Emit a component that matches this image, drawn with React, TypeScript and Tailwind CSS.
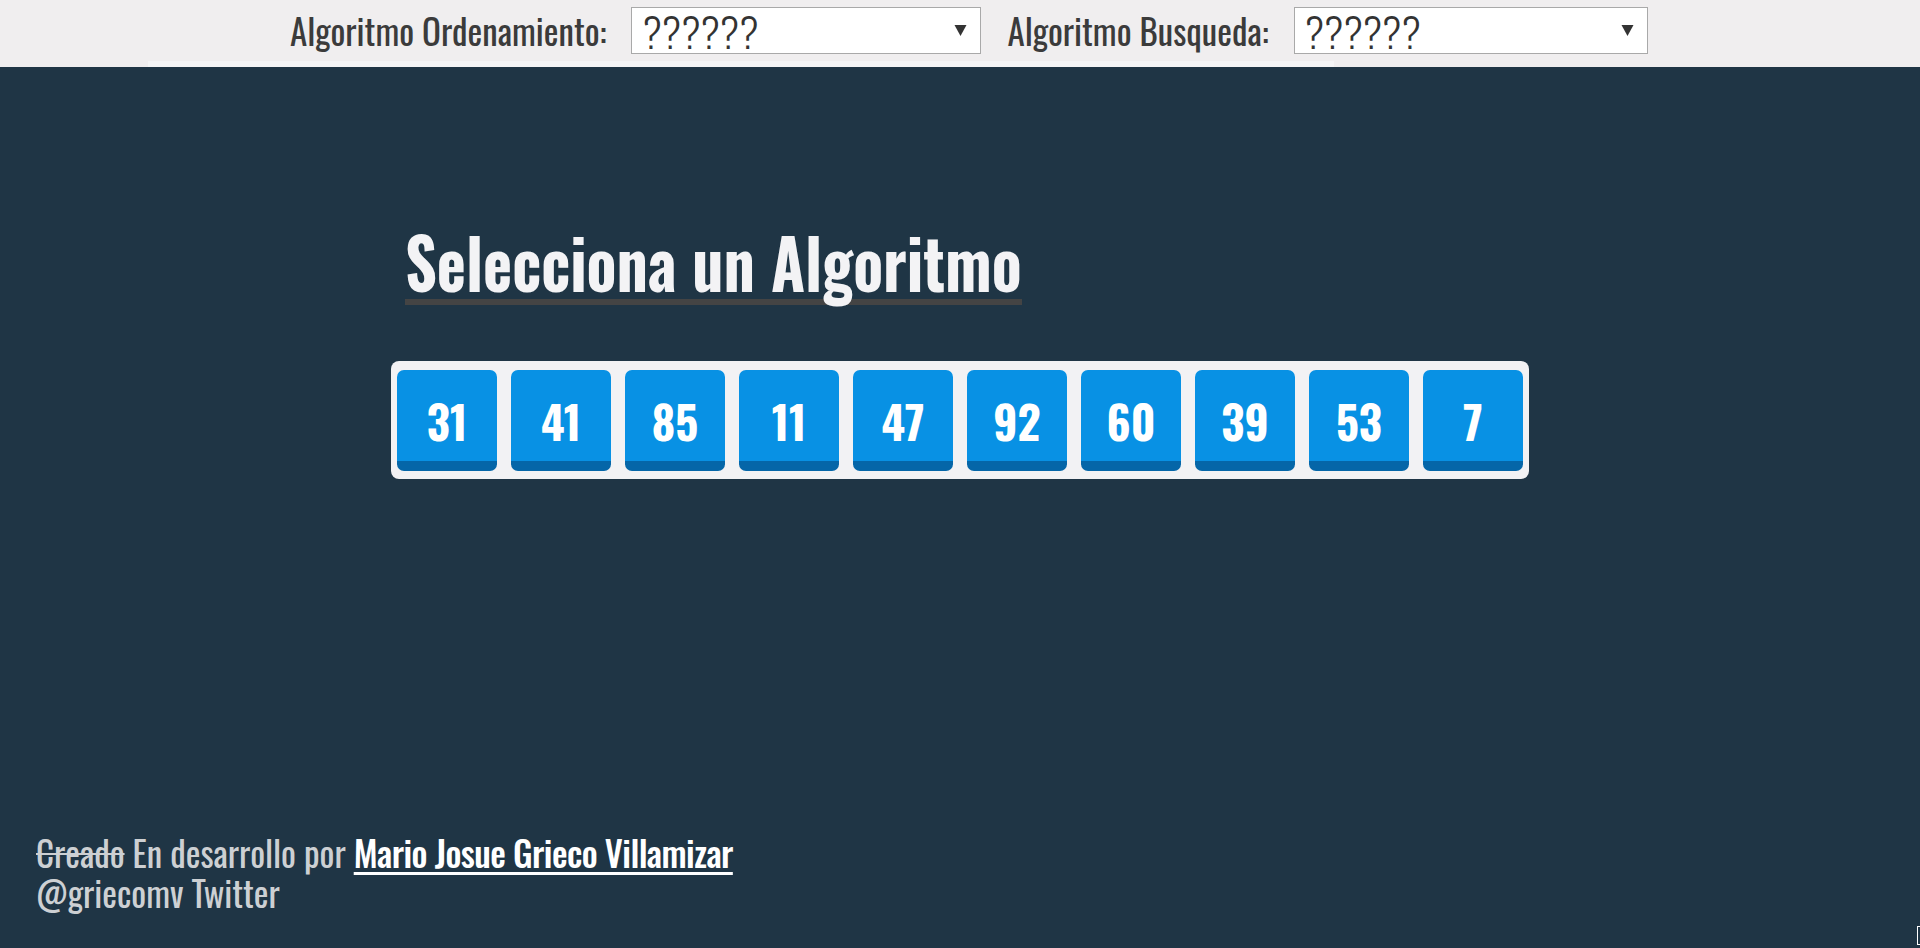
import { useState } from "react"

const numbers = [31, 41, 85, 11, 47, 92, 60, 39, 53, 7]

function Picker({ width }: { width: string }) {
  const [value, setValue] = useState("??????")
  return (
    <div className={`relative h-[47px] ${width}`}>
      <select
        value={value}
        onChange={(e) => setValue(e.target.value)}
        className="h-full w-full appearance-none border border-[#a9a9a9] bg-white pl-[10px] text-[41px] font-light leading-none text-[#333] outline-none"
      >
        <option>??????</option>
      </select>
      <svg className="pointer-events-none absolute right-[14px] top-[17px]" width="13" height="13" viewBox="0 0 13 13">
        <path d="M0.5 1 L12.5 1 L6.5 12 Z" fill="#333" />
      </svg>
    </div>
  )
}

export default function App() {
  return (
    <div className="relative flex min-h-screen flex-col bg-[#1f3545] font-['Oswald','Liberation_Sans_Narrow',sans-serif]">
      <header className="flex h-[67px] flex-col bg-[#f0eeef]">
        <div className="flex h-[61px] items-center pl-[290px]">
          <label className="text-[35px] leading-none text-[#3b3b3b]">Algoritmo Ordenamiento:</label>
          <div className="ml-[25px]">
            <Picker width="w-[350px]" />
          </div>
          <label className="ml-[26px] text-[35px] leading-none text-[#3b3b3b]">Algoritmo Busqueda:</label>
          <div className="ml-[25px]">
            <Picker width="w-[354px]" />
          </div>
        </div>
        <div className="ml-[148px] h-[6px] w-[1186px] bg-[#f5f5f6]" />
      </header>

      <main className="flex flex-1 flex-col items-start pl-[391px]">
        <h1 className="ml-[14px] mt-[169px] inline-block border-b-[6px] border-[#444] pb-[7px] text-[62px] font-bold leading-[56px] text-[#f3f3f5]">
          <span className="inline-block origin-[0_56px] scale-y-[1.12]">Selecciona un Algoritmo</span>
        </h1>

        <div className="mt-[56px] flex gap-[14px] rounded-lg bg-[#f2f2f4] px-[6px] pb-[8px] pt-[9px]">
          {numbers.map((n) => (
            <div
              key={n}
              className="flex h-[101px] w-[100px] items-center justify-center rounded-[7px] border-b-[10px] border-[#0566a8] bg-[#0891e4] pt-[9px]"
            >
              <span className="text-[45px] font-bold leading-none text-white">{n}</span>
            </div>
          ))}
        </div>
      </main>

      <footer className="px-[36px] pb-[36px] text-[35px] leading-[40px] text-[#cdd0d3]">
        <p>
          <span className="line-through decoration-2">Creado</span> En desarrollo por{" "}
          <a href="#" className="font-medium tracking-[-0.6px] text-white underline decoration-[3px] underline-offset-[4px]">
            Mario Josue Grieco Villamizar
          </a>
        </p>
        <p>@griecomv Twitter</p>
      </footer>

      <div className="absolute bottom-[3px] right-0 h-[19px] w-[3px] border-y border-l border-white" />
    </div>
  )
}
